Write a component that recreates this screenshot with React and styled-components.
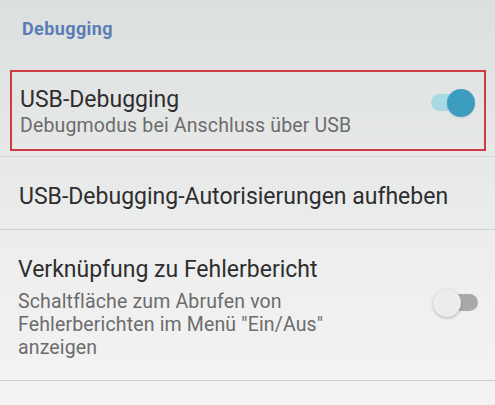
import React from "react";
import styled, { createGlobalStyle } from "styled-components";

const GlobalStyle = createGlobalStyle`
  html, body {
    margin: 0;
    padding: 0;
  }
  body {
    font-family: Roboto, "Noto Sans", sans-serif;
  }
`;

const Screen = styled.div`
  width: 495px;
  height: 405px;
  overflow: hidden;
  background: linear-gradient(180deg, #dcdfdf 0%, #e6e8e8 35%, #f0f0f0 75%, #f3f3f3 100%);
  display: flex;
  flex-direction: column;
`;

const SectionHeader = styled.div`
  height: 70px;
  padding: 18px 0 0 22px;
  box-sizing: border-box;
  color: #5a7db3;
  font-size: 18px;
  font-weight: 700;
  letter-spacing: 0.4px;
  line-height: 21px;
`;

const Row = styled.div`
  display: flex;
  align-items: flex-start;
  box-sizing: border-box;
  height: ${(p) => p.$height}px;
  padding: ${(p) => p.$padding};
  margin: ${(p) => p.$margin || "0"};
  border: ${(p) => (p.$highlight ? "2px solid #cc3b3f" : "none")};
  border-bottom: ${(p) =>
    p.$highlight ? "2px solid #cc3b3f" : "1px solid #d0d1d1"};
`;

const Spacer = styled.div`
  height: 5px;
  border-bottom: 1px solid #d3d4d4;
`;

const TextBlock = styled.div`
  flex: 1;
  display: flex;
  flex-direction: column;
`;

const Title = styled.div`
  color: #2e2e2e;
  font-size: 23px;
  line-height: 28px;
  margin-bottom: ${(p) => p.$gap || 0}px;
`;

const Summary = styled.div`
  color: #6c6c6c;
  font-size: 19.5px;
  letter-spacing: 0.15px;
  line-height: 23px;
  max-width: ${(p) => p.$maxWidth || "none"};
`;

const Track = styled.div`
  position: relative;
  width: 42px;
  height: 17px;
  border-radius: 9px;
  margin-top: ${(p) => p.$top}px;
  background: ${(p) => (p.$on ? "#a8dae5" : "#a9a9a9")};
  flex-shrink: 0;
`;

const Knob = styled.div`
  position: absolute;
  top: -5px;
  ${(p) => (p.$on ? "right: -2px;" : "left: -3px;")}
  width: 28px;
  height: 28px;
  border-radius: 50%;
  background: ${(p) => (p.$on ? "#3d9dbf" : "#ececec")};
  box-shadow: ${(p) =>
    p.$on ? "0 1px 2px rgba(0,0,0,0.12)" : "0 1px 3px rgba(0,0,0,0.28)"};
`;

function Switch({ on, top }) {
  return (
    <Track $on={on} $top={top}>
      <Knob $on={on} />
    </Track>
  );
}

export default function App() {
  return (
    <>
      <GlobalStyle />
      <Screen>
        <SectionHeader>Debugging</SectionHeader>
        <Row $highlight $height={81} $margin="0 9px 0 10px" $padding="14px 11px 0 8px">
          <TextBlock>
            <Title>USB-Debugging</Title>
            <Summary>Debugmodus bei Anschluss über USB</Summary>
          </TextBlock>
          <Switch on top={8} />
        </Row>
        <Spacer />
        <Row $height={73} $padding="26px 17px 0 19px">
          <TextBlock>
            <Title>USB-Debugging-Autorisierungen aufheben</Title>
          </TextBlock>
        </Row>
        <Row $height={151} $padding="26px 17px 0 18px">
          <TextBlock>
            <Title $gap={6}>Verknüpfung zu Fehlerbericht</Title>
            <Summary $maxWidth="335px">
              Schaltfläche zum Abrufen von Fehlerberichten im Menü "Ein/Aus" anzeigen
            </Summary>
          </TextBlock>
          <Switch top={38} />
        </Row>
      </Screen>
    </>
  );
}
